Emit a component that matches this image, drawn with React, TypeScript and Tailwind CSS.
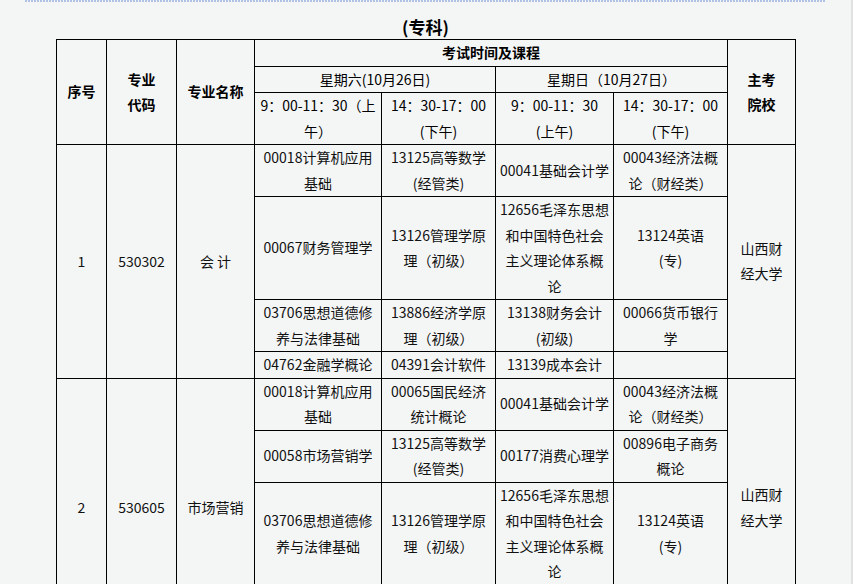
import React from "react";

type Cell = string[];
type Major = {
  no: string;
  code: string;
  name: string;
  school: string[];
  rows: Cell[][];
};

const majors: Major[] = [
  {
    no: "1",
    code: "530302",
    name: "会 计",
    school: ["山西财", "经大学"],
    rows: [
      [
        ["00018计算机应用", "基础"],
        ["13125高等数学", "(经管类)"],
        ["00041基础会计学"],
        ["00043经济法概", "论（财经类）"],
      ],
      [
        ["00067财务管理学"],
        ["13126管理学原", "理（初级）"],
        ["12656毛泽东思想", "和中国特色社会", "主义理论体系概", "论"],
        ["13124英语", "(专)"],
      ],
      [
        ["03706思想道德修", "养与法律基础"],
        ["13886经济学原", "理（初级）"],
        ["13138财务会计", "(初级)"],
        ["00066货币银行", "学"],
      ],
      [["04762金融学概论"], ["04391会计软件"], ["13139成本会计"], [""]],
    ],
  },
  {
    no: "2",
    code: "530605",
    name: "市场营销",
    school: ["山西财", "经大学"],
    rows: [
      [
        ["00018计算机应用", "基础"],
        ["00065国民经济", "统计概论"],
        ["00041基础会计学"],
        ["00043经济法概", "论（财经类）"],
      ],
      [
        ["00058市场营销学"],
        ["13125高等数学", "(经管类)"],
        ["00177消费心理学"],
        ["00896电子商务", "概论"],
      ],
      [
        ["03706思想道德修", "养与法律基础"],
        ["13126管理学原", "理（初级）"],
        ["12656毛泽东思想", "和中国特色社会", "主义理论体系概", "论"],
        ["13124英语", "(专)"],
      ],
      [
        ["00098国际市场营", "销学"],
        ["00185商品流通", "概论"],
        ["00186国际商务", "谈判"],
        ["00178市场调查与", "预测"],
      ],
    ],
  },
];

function Lines({ lines }: { lines: string[] }) {
  return (
    <>
      {lines.map((l, i) => (
        <span key={i} className="block whitespace-nowrap">
          {l}
        </span>
      ))}
    </>
  );
}

const td = "border border-black p-0 text-center align-middle";

export default function App() {
  return (
    <div
      className="min-h-screen w-full bg-[#f4f6f6] border-r-2 border-[#e0e2e2] text-[14px] leading-[25.5px] text-[#111]"
      style={{ fontFamily: '"Noto Sans CJK SC", "Noto Sans", sans-serif' }}
    >
      <div className="mx-[25px] h-[2px] bg-[repeating-linear-gradient(90deg,#afc2e6_0_2px,transparent_2px_3px)]" />
      <h2 className="pt-[12px] text-center text-[17px] font-bold leading-[25px] text-black">
        (专科)
      </h2>
      <table className="ml-[56px] w-[739px] table-fixed border-collapse">
        <colgroup>
          <col className="w-[50px]" />
          <col className="w-[70px]" />
          <col className="w-[78px]" />
          <col className="w-[127px]" />
          <col className="w-[114px]" />
          <col className="w-[118px]" />
          <col className="w-[114px]" />
          <col className="w-[68px]" />
        </colgroup>
        <thead className="font-bold text-black">
          <tr>
            <th rowSpan={3} className={td}>
              序号
            </th>
            <th rowSpan={3} className={td}>
              <Lines lines={["专业", "代码"]} />
            </th>
            <th rowSpan={3} className={td}>
              专业名称
            </th>
            <th colSpan={4} className={td}>
              考试时间及课程
            </th>
            <th rowSpan={3} className={td}>
              <Lines lines={["主考", "院校"]} />
            </th>
          </tr>
          <tr className="font-normal">
            <th colSpan={2} className={`${td} font-normal`}>
              星期六(10月26日)
            </th>
            <th colSpan={2} className={`${td} font-normal`}>
              星期日（10月27日）
            </th>
          </tr>
          <tr>
            <th className={`${td} font-normal`}>
              <Lines lines={["9：00-11：30（上", "午）"]} />
            </th>
            <th className={`${td} font-normal`}>
              <Lines lines={["14：30-17：00", "(下午)"]} />
            </th>
            <th className={`${td} font-normal`}>
              <Lines lines={["9：00-11：30", "(上午)"]} />
            </th>
            <th className={`${td} font-normal`}>
              <Lines lines={["14：30-17：00", "(下午)"]} />
            </th>
          </tr>
        </thead>
        <tbody>
          {majors.map((m) =>
            m.rows.map((row, ri) => (
              <tr key={`${m.no}-${ri}`}>
                {ri === 0 && (
                  <>
                    <td rowSpan={m.rows.length} className={td}>
                      {m.no}
                    </td>
                    <td rowSpan={m.rows.length} className={td}>
                      {m.code}
                    </td>
                    <td rowSpan={m.rows.length} className={td}>
                      {m.name}
                    </td>
                  </>
                )}
                {row.map((cell, ci) => (
                  <td key={ci} className={td}>
                    <Lines lines={cell} />
                  </td>
                ))}
                {ri === 0 && (
                  <td rowSpan={m.rows.length} className={td}>
                    <Lines lines={m.school} />
                  </td>
                )}
              </tr>
            ))
          )}
        </tbody>
      </table>
    </div>
  );
}
